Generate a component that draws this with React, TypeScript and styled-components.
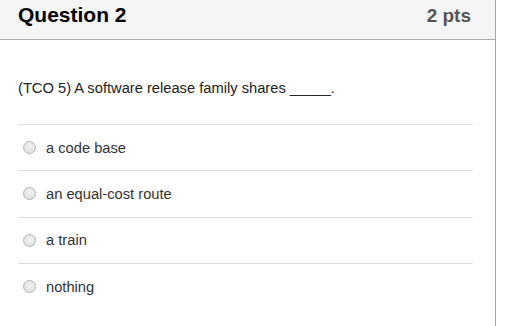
import styled, { createGlobalStyle } from "styled-components";

const GlobalStyle = createGlobalStyle`
    body {
        margin: 0;
        background: #fff;
        font-family: "Liberation Sans", Arial, Helvetica, sans-serif;
    }
`

const Panel = styled.div`
    width: 495px;
    height: 326px;
    border-right: 1px solid #a5a5a5;
    box-sizing: content-box;
`
const Header = styled.div`
    display: flex;
    align-items: center;
    justify-content: space-between;
    height: 39px;
    padding: 0 24px 0 18px;
    background: #f5f5f5;
    border-bottom: 1px solid #aaa;
`
const Title = styled.h2`
    margin: 0 0 9px;
    font-size: 21px;
    font-weight: bold;
    color: #000;
`
const Points = styled.span`
    margin-bottom: 8px;
    font-size: 19px;
    font-weight: bold;
    color: #555;
`
const Body = styled.div`
    padding: 38px 22px 0 18px;
`
const QuestionText = styled.p`
    margin: 0 0 26px;
    font-size: 14.7px;
    line-height: 20px;
    color: #222;
`
const Answer = styled.label`
    display: flex;
    align-items: center;
    gap: 10px;
    height: 46.3px;
    box-sizing: border-box;
    padding-left: 5px;
    border-top: 1px solid #ddd;
    font-size: 14.7px;
    color: #333;
`
const Radio = styled.span`
    width: 13px;
    height: 13px;
    border-radius: 50%;
    box-sizing: border-box;
    border: 1px solid #b3b3b3;
    background: radial-gradient(circle at 50% 40%, #f2f2f2 0%, #dcdcdc 100%);
`

const answers = ["a code base", "an equal-cost route", "a train", "nothing"];

export default function App(){
    return(
        <>
            <GlobalStyle />
            <Panel>
                <Header>
                    <Title>Question 2</Title>
                    <Points>2 pts</Points>
                </Header>
                <Body>
                    <QuestionText>(TCO 5) A software release family shares _____.</QuestionText>
                    {answers.map((a) => (
                        <Answer key={a}>
                            <Radio />
                            {a}
                        </Answer>
                    ))}
                </Body>
            </Panel>
        </>
    )
}
